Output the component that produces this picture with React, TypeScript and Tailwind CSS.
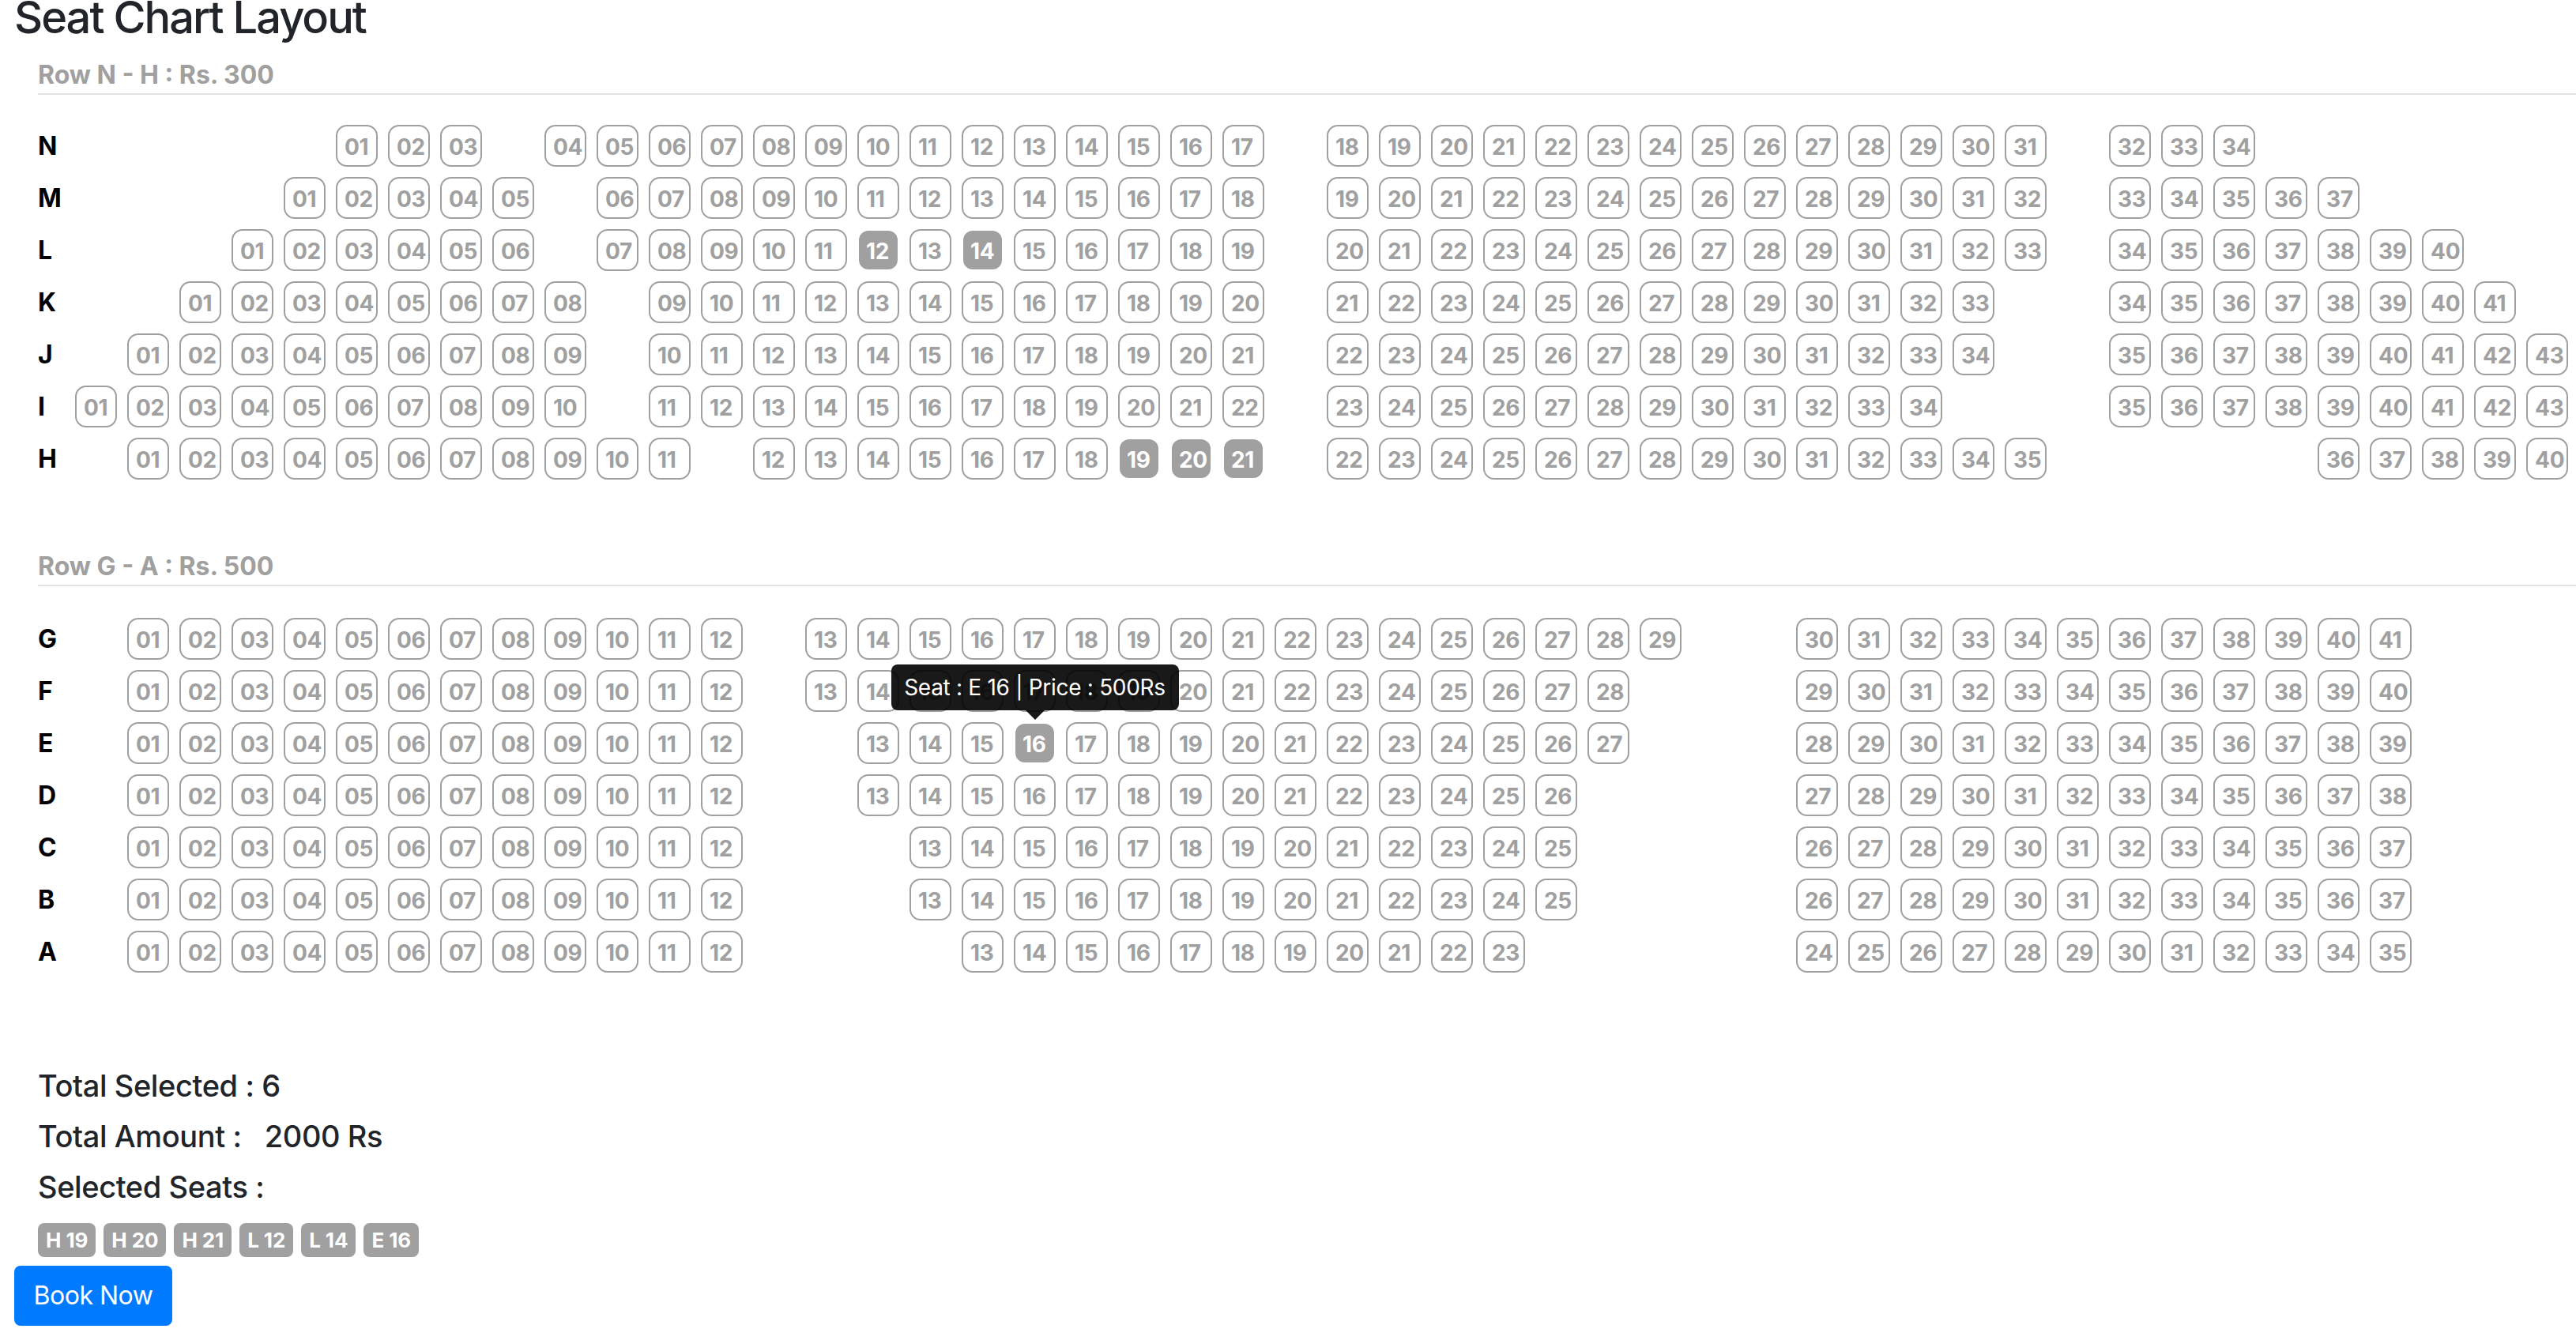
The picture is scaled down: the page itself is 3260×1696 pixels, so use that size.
import React from "react";

type Seg = [number, number, number];
type Row = { label: string; segs: Seg[] };

const upper: Row[] = [
  { label: "N", segs: [[5, 1, 3], [9, 4, 17], [24, 18, 31], [39, 32, 34]] },
  { label: "M", segs: [[4, 1, 5], [10, 6, 18], [24, 19, 32], [39, 33, 37]] },
  { label: "L", segs: [[3, 1, 6], [10, 7, 19], [24, 20, 33], [39, 34, 40]] },
  { label: "K", segs: [[2, 1, 8], [11, 9, 20], [24, 21, 33], [39, 34, 41]] },
  { label: "J", segs: [[1, 1, 9], [11, 10, 21], [24, 22, 34], [39, 35, 43]] },
  { label: "I", segs: [[0, 1, 10], [11, 11, 22], [24, 23, 34], [39, 35, 43]] },
  { label: "H", segs: [[1, 1, 11], [13, 12, 21], [24, 22, 35], [43, 36, 40]] },
];

const lower: Row[] = [
  { label: "G", segs: [[1, 1, 12], [14, 13, 29], [33, 30, 41]] },
  { label: "F", segs: [[1, 1, 12], [14, 13, 28], [33, 29, 40]] },
  { label: "E", segs: [[1, 1, 12], [15, 13, 27], [33, 28, 39]] },
  { label: "D", segs: [[1, 1, 12], [15, 13, 26], [33, 27, 38]] },
  { label: "C", segs: [[1, 1, 12], [16, 13, 25], [33, 26, 37]] },
  { label: "B", segs: [[1, 1, 12], [16, 13, 25], [33, 26, 37]] },
  { label: "A", segs: [[1, 1, 12], [17, 13, 23], [33, 24, 35]] },
];

const selected = new Set(["H19", "H20", "H21", "L12", "L14", "E16"]);
const pad = (n: number) => (n < 10 ? "0" + n : "" + n);

function Tooltip() {
  return (
    <div className="absolute bottom-[66px] left-1/2 -translate-x-1/2 z-10">
      <div className="h-[58px] w-[364px] rounded-lg bg-black/90 text-white text-[28px] font-normal leading-[58px] text-center whitespace-nowrap">
        Seat : E 16 | Price : 500Rs
      </div>
      <div className="absolute left-1/2 top-[58px] -translate-x-1/2 h-0 w-0 border-x-[12px] border-t-[12px] border-x-transparent border-t-black/90" />
    </div>
  );
}

function Seat({ label, n }: { label: string; n: number }) {
  const on = selected.has(label + n);
  return (
    <div
      className={
        "relative h-[53px] w-[53px] shrink-0 rounded-[14px] border-2 pl-[9px] text-[28px] font-bold leading-[53px] tracking-[-0.3px] whitespace-nowrap " +
        (on
          ? "border-transparent bg-[#a0a0a0] bg-clip-padding text-white"
          : "border-[#a0a0a0] text-[#a0a0a0]")
      }
    >
      {pad(n)}
      {label === "E" && n === 16 ? <Tooltip /> : null}
    </div>
  );
}

function SeatRow({ row }: { row: Row }) {
  const cells: React.ReactNode[] = [];
  let slot = 0;
  row.segs.forEach(([start, a, b]) => {
    while (slot < start) {
      cells.push(<div key={"s" + slot} className="h-[53px] w-[53px] shrink-0" />);
      slot++;
    }
    for (let n = a; n <= b; n++) {
      cells.push(<Seat key={n} label={row.label} n={n} />);
      slot++;
    }
  });
  return (
    <div className="flex h-[53px] items-center">
      <div className="h-[53px] w-[47px] shrink-0 text-[32px] font-bold text-black leading-[53px]">{row.label}</div>
      <div className="flex gap-[13px]">{cells}</div>
    </div>
  );
}

function Section({ title, rows, top, gap }: { title: string; rows: Row[]; top: string; gap: string }) {
  return (
    <section className={top}>
      <div className="h-[48px] border-b-2 border-[#e2e2e2] text-[32px] font-bold leading-[46px] text-[#a0a0a0]">
        {title}
      </div>
      <div className={"flex flex-col gap-[13px] " + gap}>
        {rows.map((r) => (
          <SeatRow key={r.label} row={r} />
        ))}
      </div>
    </section>
  );
}

export default function App() {
  const badges = ["H 19", "H 20", "H 21", "L 12", "L 14", "E 16"];
  return (
    <div className="h-[1696px] w-[3260px] overflow-hidden bg-white pl-[18px] font-['Inter','Liberation_Sans',sans-serif] text-[#212529]">
      <h3 className="-mt-[11px] h-[66px] text-[56px] font-medium leading-[67px] tracking-[-2px]">Seat Chart Layout</h3>
      <div className="pl-[30px]">
        <Section title="Row N - H : Rs. 300" rows={upper} top="mt-[17px]" gap="mt-[38px]" />
        <Section title="Row G - A : Rs. 500" rows={lower} top="mt-[87px]" gap="mt-[40px]" />
        <div className="mt-[118px] flex flex-col gap-[14px] text-[38px] font-[450] leading-[50px] tracking-[-0.4px]">
          <div>Total Selected : 6</div>
          <div className="whitespace-pre">Total Amount :   2000 Rs</div>
          <div>Selected Seats :</div>
        </div>
        <div className="mt-[21px] flex gap-[10px]">
          {badges.map((b) => (
            <span key={b} className="h-[43px] rounded-lg bg-[#a0a0a0] px-[10px] text-[26px] font-bold leading-[43px] tracking-[-0.1px] text-white">
              {b}
            </span>
          ))}
        </div>
      </div>
      <button className="mt-[11px] h-[76px] w-[200px] rounded-lg bg-[#007bff] text-[32px] font-normal tracking-[-0.5px] text-white">
        Book Now
      </button>
    </div>
  );
}
